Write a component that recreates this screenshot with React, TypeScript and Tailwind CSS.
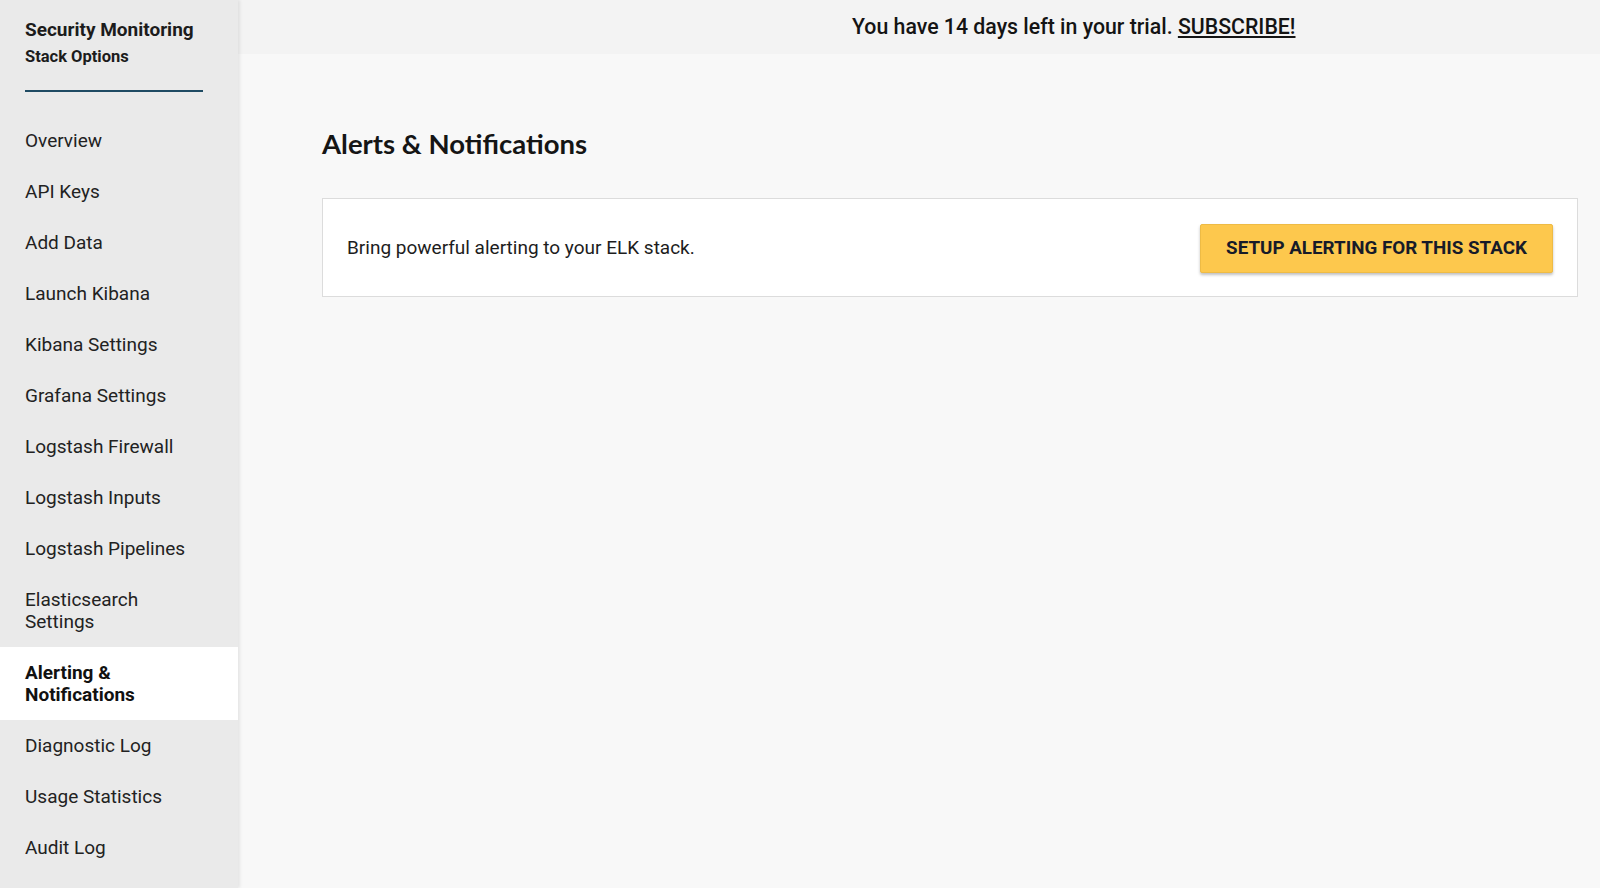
import React from 'react'

const navItems = [
  'Overview',
  'API Keys',
  'Add Data',
  'Launch Kibana',
  'Kibana Settings',
  'Grafana Settings',
  'Logstash Firewall',
  'Logstash Inputs',
  'Logstash Pipelines',
  'Elasticsearch Settings',
  'Alerting & Notifications',
  'Diagnostic Log',
  'Usage Statistics',
  'Audit Log',
]

const twoLine: Record<string, [string, string]> = {
  'Elasticsearch Settings': ['Elasticsearch', 'Settings'],
  'Alerting & Notifications': ['Alerting &', 'Notifications'],
}

export default function App() {
  const active = 'Alerting & Notifications'

  return (
    <div
      className="flex h-[888px] w-[1600px] overflow-hidden bg-[#f8f8f8] text-[#1b1b1b]"
      style={{ fontFamily: 'Roboto, "Liberation Sans", sans-serif' }}
    >
      <aside className="relative z-10 flex w-[238px] shrink-0 flex-col bg-[#eaeaea] shadow-[2px_0_3px_rgba(0,0,0,0.08)]">
        <div className="px-[25px] pt-[18px]">
          <div className="text-[19px] font-bold leading-[24px] text-[#1c1c1c]">Security Monitoring</div>
          <div className="mt-[5px] text-[16.5px] font-bold leading-[20px] text-[#1c1c1c]">Stack Options</div>
          <div className="mt-[23px] h-[2px] w-[178px] bg-[#1f4b63]" />
        </div>

        <nav className="mt-[23px] flex flex-col">
          {navItems.map((item) => {
            const lines = twoLine[item]
            const isActive = item === active
            return (
              <a
                key={item}
                href="#"
                className={
                  isActive
                    ? 'block bg-white px-[25px] py-[14.5px] text-[19px] font-bold leading-[22px] text-[#111]'
                    : 'block px-[25px] py-[14.5px] text-[19px] leading-[22px] text-[#222] hover:bg-[#e2e2e2]'
                }
              >
                {lines ? (
                  <>
                    <div>{lines[0]}</div>
                    <div>{lines[1]}</div>
                  </>
                ) : (
                  item
                )}
              </a>
            )
          })}
        </nav>
      </aside>

      <main className="flex min-w-0 flex-1 flex-col">
        <div className="flex h-[54px] shrink-0 items-center bg-[#f3f3f3] pl-[614px]">
          <p className="text-[21.3px] font-medium leading-none text-[#141414]">
            You have 14 days left in your trial.{' '}
            <a href="#" className="underline underline-offset-2">
              SUBSCRIBE!
            </a>
          </p>
        </div>

        <div className="pl-[84px] pr-[22px]">
          <h1
            className="mt-[74px] text-[27.5px] font-bold leading-[32px] text-[#151515]"
            style={{ fontFamily: 'Lato, "Open Sans", sans-serif' }}
          >
            Alerts &amp; Notifications
          </h1>

          <div className="mt-[38px] flex h-[99px] items-center justify-between border border-[#dcdcdc] bg-white px-[24px]">
            <p className="text-[19px] leading-[24px] text-[#1d1d1d]">Bring powerful alerting to your ELK stack.</p>
            <button className="mt-[2px] h-[49px] w-[353px] rounded-[2px] border border-[#eebb45] bg-[#fdc84d] text-[18.8px] font-bold text-[#171b29] shadow-[0_2px_3px_rgba(0,0,0,0.25)]">
              SETUP ALERTING FOR THIS STACK
            </button>
          </div>
        </div>
      </main>
    </div>
  )
}
